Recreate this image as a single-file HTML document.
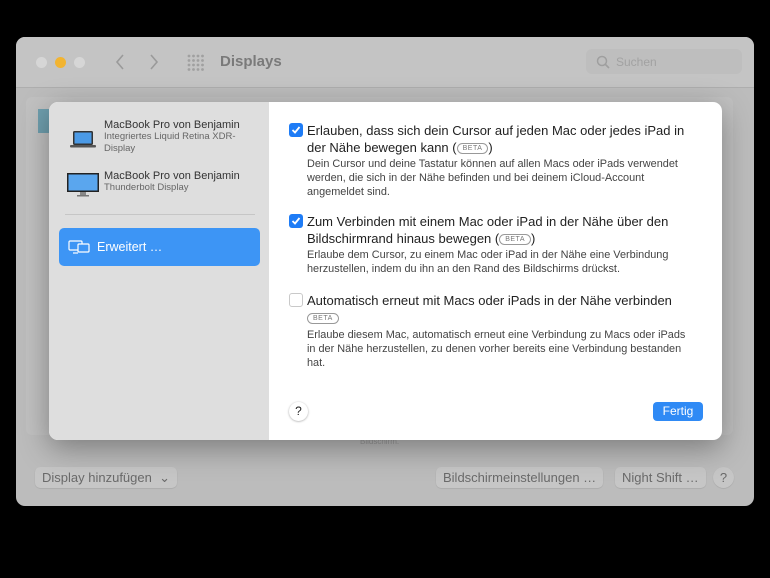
<!DOCTYPE html>
<html><head><meta charset="utf-8"><style>
*{margin:0;padding:0;box-sizing:border-box}
body{width:770px;height:578px;background:#000;font-family:"Liberation Sans",sans-serif;position:relative;overflow:hidden}
.win{position:absolute;left:16px;top:37px;width:738px;height:469px;background:#bcbcbc;border-radius:9px;overflow:hidden}
.tb{position:absolute;left:0;top:0;width:738px;height:51px;background:#c4c4c4;border-bottom:1px solid #aeaeae}
.dot{position:absolute;top:20px;width:11px;height:11px;border-radius:50%}
.inner{position:absolute;left:10px;top:60px;width:707px;height:338px;background:#c1c1c1;border-radius:6px}
.btn{position:absolute;top:430px;height:21px;background:#c6c6c6;border-radius:5px;font-size:13px;color:#6a6a6a;line-height:21px;padding:0 7px;box-shadow:0 0.5px 1px rgba(0,0,0,.15)}
.dlg{position:absolute;left:49px;top:102px;width:673px;height:338px;border-radius:9px;overflow:hidden;background:#fff;box-shadow:0 8px 30px rgba(0,0,0,.35)}
.side{position:absolute;left:0;top:0;width:220px;height:338px;background:#dedede}
.t1{font-size:11px;color:#333;line-height:12px}
.t2{font-size:9.5px;color:#666;line-height:12px}
.opt{position:absolute;left:240px;width:420px}
.cb{position:absolute;left:0;width:14px;height:14px;border-radius:3px;background:#1e7cf6}
.cb.off{background:#fff;border:1px solid #c9c9c9}
.h{position:absolute;left:18px;font-size:13px;color:#222;line-height:17px;width:386px}
.d{position:absolute;left:18px;font-size:10.9px;color:#444;line-height:14px;width:392px}
.beta{display:inline-block;font-size:7px;color:#777;border:1px solid #999;border-radius:7px;padding:0 5px;line-height:9px;vertical-align:2px;letter-spacing:.5px}
</style></head><body>
<div class="win">
 <div class="tb">
  <div class="dot" style="left:20px;background:#d6d6d6"></div>
  <div class="dot" style="left:39px;background:#f2b431"></div>
  <div class="dot" style="left:58px;background:#d6d6d6"></div>
  <svg style="position:absolute;left:98px;top:16px" width="50" height="18"><path d="M9 2 L3 9 L9 16" stroke="#9a9a9a" stroke-width="1.6" fill="none"/><path d="M37 2 L43 9 L37 16" stroke="#9a9a9a" stroke-width="1.6" fill="none"/></svg>
  <svg style="position:absolute;left:171px;top:17px" width="18" height="18" fill="#a0a0a0"><circle cx="2" cy="2" r="1.4"/><circle cx="6.5" cy="2" r="1.4"/><circle cx="11" cy="2" r="1.4"/><circle cx="15.5" cy="2" r="1.4"/><circle cx="2" cy="6.5" r="1.4"/><circle cx="6.5" cy="6.5" r="1.4"/><circle cx="11" cy="6.5" r="1.4"/><circle cx="15.5" cy="6.5" r="1.4"/><circle cx="2" cy="11" r="1.4"/><circle cx="6.5" cy="11" r="1.4"/><circle cx="11" cy="11" r="1.4"/><circle cx="15.5" cy="11" r="1.4"/><circle cx="2" cy="15.5" r="1.4"/><circle cx="6.5" cy="15.5" r="1.4"/><circle cx="11" cy="15.5" r="1.4"/><circle cx="15.5" cy="15.5" r="1.4"/></svg>
  <div style="position:absolute;left:204px;top:16px;font-size:15px;font-weight:bold;color:#7a7a7a">Displays</div>
  <div style="position:absolute;left:570px;top:12px;width:156px;height:25px;background:#bebebe;border-radius:6px">
   <svg style="position:absolute;left:10px;top:6px" width="14" height="14"><circle cx="6" cy="6" r="4.5" stroke="#9f9f9f" stroke-width="1.5" fill="none"/><path d="M9.5 9.5 L13 13" stroke="#9f9f9f" stroke-width="1.6"/></svg>
   <div style="position:absolute;left:30px;top:6px;font-size:12px;color:#a2a2a2">Suchen</div>
  </div>
 </div>
 <div class="inner"></div>
 <div style="position:absolute;left:22px;top:72px;width:12px;height:24px;background:#6f9fae"></div>
 <div style="position:absolute;left:344px;top:400px;font-size:8px;color:#999">Bildschirm.</div>
 <div class="btn" style="left:19px">Display hinzufügen &nbsp;⌄</div>
 <div class="btn" style="left:420px">Bildschirmeinstellungen …</div>
 <div class="btn" style="left:599px">Night Shift …</div>
 <div class="btn" style="left:697px;width:21px;border-radius:50%;padding:0;text-align:center">?</div>
</div>
<div class="dlg">
 <div class="side">
  <svg style="position:absolute;left:20px;top:28px" width="28" height="20"><rect x="4" y="1" width="20" height="14" rx="1.5" fill="#333"/><rect x="5.5" y="2.5" width="17" height="11" fill="#4b9ae6"/><rect x="1" y="15" width="26" height="2.5" rx="1" fill="#555"/></svg>
  <div style="position:absolute;left:55px;top:17px"><div class="t1">MacBook Pro von Benjamin</div><div class="t2">Integriertes Liquid Retina XDR-<br>Display</div></div>
  <svg style="position:absolute;left:17px;top:70px" width="34" height="26"><rect x="1" y="1" width="32" height="19" fill="#222"/><rect x="2.5" y="2.5" width="29" height="16" fill="#5aa6ee"/><rect x="14" y="20" width="6" height="3" fill="#888"/><rect x="11" y="23" width="12" height="1.5" fill="#777"/></svg>
  <div style="position:absolute;left:55px;top:68px"><div class="t1">MacBook Pro von Benjamin</div><div class="t2">Thunderbolt Display</div></div>
  <div style="position:absolute;left:16px;top:112px;width:190px;height:1px;background:#c6c6c6"></div>
  <div style="position:absolute;left:10px;top:126px;width:201px;height:38px;background:#3d95f5;border-radius:5px">
   <svg style="position:absolute;left:9px;top:12px" width="22" height="15"><rect x="1" y="1" width="13" height="9" rx="1" stroke="#fff" stroke-width="1.2" fill="none"/><rect x="10" y="4" width="11" height="8" rx="1" stroke="#fff" stroke-width="1.2" fill="#3d95f5"/><path d="M5 13h5" stroke="#fff" stroke-width="1.2"/></svg>
   <div style="position:absolute;left:38px;top:12px;font-size:12.5px;color:#fff">Erweitert …</div>
  </div>
 </div>
 <div class="opt" style="top:20px">
  <div class="cb" style="top:1px"><svg width="14" height="14"><path d="M3.5 7 L6 9.5 L10.5 4" stroke="#fff" stroke-width="1.8" fill="none"/></svg></div>
  <div class="h" style="top:0">Erlauben, dass sich dein Cursor auf jeden Mac oder jedes iPad in der Nähe bewegen kann (<span class="beta">BETA</span>)</div>
  <div class="d" style="top:35px">Dein Cursor und deine Tastatur können auf allen Macs oder iPads verwendet werden, die sich in der Nähe befinden und bei deinem iCloud-Account angemeldet sind.</div>
 </div>
 <div class="opt" style="top:111px">
  <div class="cb" style="top:1px"><svg width="14" height="14"><path d="M3.5 7 L6 9.5 L10.5 4" stroke="#fff" stroke-width="1.8" fill="none"/></svg></div>
  <div class="h" style="top:0">Zum Verbinden mit einem Mac oder iPad in der Nähe über den Bildschirmrand hinaus bewegen (<span class="beta">BETA</span>)</div>
  <div class="d" style="top:35px">Erlaube dem Cursor, zu einem Mac oder iPad in der Nähe eine Verbindung herzustellen, indem du ihn an den Rand des Bildschirms drückst.</div>
 </div>
 <div class="opt" style="top:190px">
  <div class="cb off" style="top:1px"></div>
  <div class="h" style="top:0;width:400px">Automatisch erneut mit Macs oder iPads in der Nähe verbinden<br><span class="beta">BETA</span></div>
  <div class="d" style="top:36px;width:400px">Erlaube diesem Mac, automatisch erneut eine Verbindung zu Macs oder iPads<br>in der Nähe herzustellen, zu denen vorher bereits eine Verbindung bestanden<br>hat.</div>
 </div>
 <div style="position:absolute;left:240px;top:300px;width:19px;height:19px;border-radius:50%;background:#fff;box-shadow:0 0.5px 2px rgba(0,0,0,.35);text-align:center;font-size:12px;line-height:19px;color:#222">?</div>
 <div style="position:absolute;left:604px;top:300px;width:50px;height:19px;border-radius:4px;background:#2f8af5;color:#fff;font-size:12px;text-align:center;line-height:19px">Fertig</div>
</div>
</body></html>
